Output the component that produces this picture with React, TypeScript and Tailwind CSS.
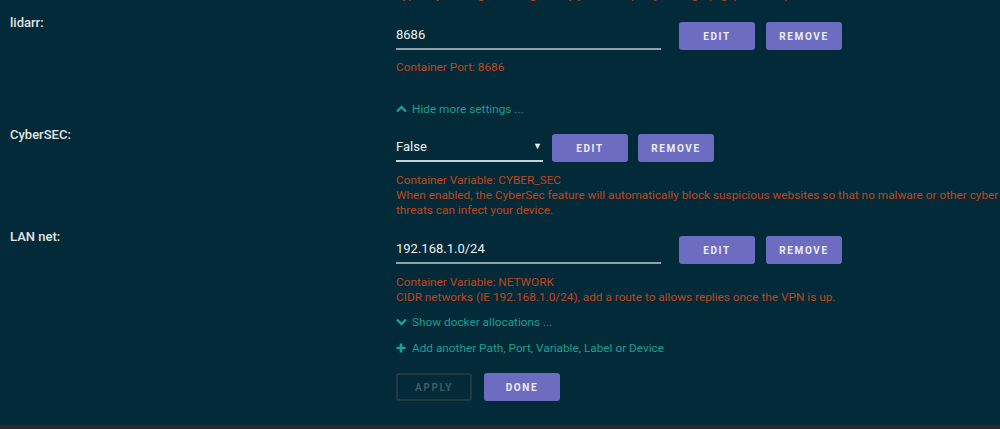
import React from 'react';

const font = { fontFamily: 'Roboto, "Liberation Sans", sans-serif' };

const Btn: React.FC<{ label: string }> = ({ label }) => (
  <button className="h-[28px] w-[76px] rounded-[3px] bg-[#6c6cc0] text-[10px] font-bold tracking-[1.6px] text-[#ececf6]">
    {label}
  </button>
);

const Chevron: React.FC<{ up?: boolean }> = ({ up }) => (
  <svg width="11" height="8" viewBox="0 0 11 8" className="mr-[5px]">
    <path
      d={up ? 'M1 6.5 L5.5 2 L10 6.5' : 'M1 1.5 L5.5 6 L10 1.5'}
      fill="none"
      stroke="currentColor"
      strokeWidth="2.4"
    />
  </svg>
);

const Plus = () => (
  <svg width="10" height="10" viewBox="0 0 10 10" className="mr-[6px]">
    <path d="M5 0.5 V9.5 M0.5 5 H9.5" stroke="currentColor" strokeWidth="2.6" />
  </svg>
);

const Row: React.FC<{ label: string; children: React.ReactNode }> = ({ label, children }) => (
  <div className="flex">
    <div className="w-[396px] shrink-0 pl-[10px] pt-[2px] text-[13px] leading-[16px] font-medium text-[#e2e6e8]">
      {label}
    </div>
    <div className="w-[604px] pt-[9px]">{children}</div>
  </div>
);

const desc = 'text-[11.8px] leading-[15px] text-[#c0461c]';
const link = 'flex items-center text-[11.8px] leading-[16px] text-[#1f9e93]';

export default function App() {
  return (
    <div style={font} className="flex h-[429px] w-[1000px] flex-col overflow-hidden bg-[#022a39]">
      <div className="h-[3px] overflow-hidden pl-[396px]">
        <div className="-mt-[12px] text-[11.8px] leading-[15px] whitespace-nowrap text-[#c0461c]">
          Typically Lidarr gets configured by you in the proxy settings (e.g. port 8686)
        </div>
      </div>

      <div className="mt-[10px]">
        <Row label="lidarr:">
          <div className="flex items-center">
            <div className="flex h-[28px] w-[265px] items-center border-b-2 border-[#8fa3a8] text-[13px] text-[#eef0f0]">
              8686
            </div>
            <div className="ml-[18px] flex gap-[11px]">
              <Btn label="EDIT" />
              <Btn label="REMOVE" />
            </div>
          </div>
          <div className={`mt-[10px] ${desc}`}>Container Port: 8686</div>
          <div className={`mt-[26px] ${link}`}>
            <Chevron up />
            Hide more settings ...
          </div>
        </Row>
      </div>

      <div className="mt-[8px]">
        <Row label="CyberSEC:">
          <div className="flex items-center">
            <div className="flex h-[28px] w-[147px] items-center justify-between border-b-2 border-[#c8d2d4] text-[13px] text-[#eef0f0]">
              <span>False</span>
              <span className="pr-[1px] text-[9px]">▼</span>
            </div>
            <div className="ml-[9px] flex gap-[10px]">
              <Btn label="EDIT" />
              <Btn label="REMOVE" />
            </div>
          </div>
          <div className={`mt-[11px] ${desc}`}>
            <div>Container Variable: CYBER_SEC</div>
            <div>
              When enabled, the CyberSec feature will automatically block suspicious websites so that no malware or other cyber threats can infect your device.
            </div>
          </div>
        </Row>
      </div>

      <div className="mt-[9px]">
        <Row label="LAN net:">
          <div className="flex items-center">
            <div className="flex h-[28px] w-[265px] items-center border-b-2 border-[#8fa3a8] text-[13px] text-[#eef0f0]">
              192.168.1.0/24
            </div>
            <div className="ml-[18px] flex gap-[11px]">
              <Btn label="EDIT" />
              <Btn label="REMOVE" />
            </div>
          </div>
          <div className={`mt-[11px] ${desc}`}>
            <div>Container Variable: NETWORK</div>
            <div>CIDR networks (IE 192.168.1.0/24), add a route to allows replies once the VPN is up.</div>
          </div>
          <div className={`mt-[9px] ${link}`}>
            <Chevron />
            Show docker allocations ...
          </div>
          <div className={`mt-[10px] ${link}`}>
            <Plus />
            Add another Path, Port, Variable, Label or Device
          </div>
          <div className="mt-[17px] flex gap-[12px]">
            <button className="h-[28px] w-[76px] rounded-[3px] border-2 border-[#1d3b45] text-[10px] font-bold tracking-[1.6px] text-[#3e5a60]">
              APPLY
            </button>
            <Btn label="DONE" />
          </div>
        </Row>
      </div>

      <div className="flex-1" />
      <div className="h-[4px] bg-[#2a2a2a]" />
    </div>
  );
}
